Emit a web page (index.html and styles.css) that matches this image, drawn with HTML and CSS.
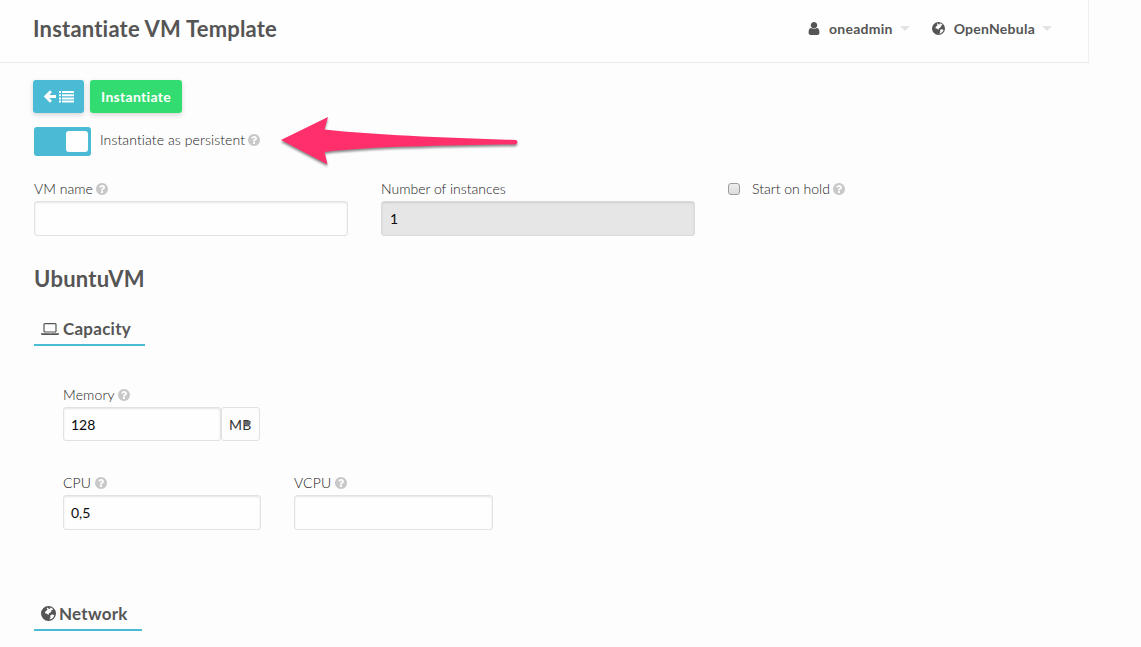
FILE: index.html
```
<!DOCTYPE html>
<html lang="en">
<head>
<meta charset="utf-8">
<title>Instantiate VM Template</title>
<link rel="stylesheet" href="styles.css">
</head>
<body>
<svg class="sprite" aria-hidden="true">
  <symbol id="help" viewBox="128 128 1536 1536"><path d="M1024 1376v-192q0-14-9-23t-23-9h-192q-14 0-23 9t-9 23v192q0 14 9 23t23 9h192q14 0 23-9t9-23zm256-672q0-88-55.500-163t-138.500-116-170-41q-243 0-371 213-15 24 8 42l132 100q7 6 19 6 16 0 25-12 53-68 86-92 34-24 86-24 48 0 85.500 26t37.500 59q0 38-20 61t-68 45q-63 28-115.500 86.500t-52.500 125.500v36q0 14 9 23t23 9h192q14 0 23-9t9-23q0-19 21.500-49.500t54.500-49.500q32-18 49-28.500t46-35 44.500-48 28-60.500 12.500-81zm384 192q0 209-103 385.500t-279.500 279.500-385.500 103-385.500-103-279.500-279.500-103-385.500 103-385.500 279.500-279.500 385.500-103 385.500 103 279.500 279.500 103 385.500z"/></symbol>
  <symbol id="globe" viewBox="0 0 24 24"><path fill-rule="evenodd" d="M12 0a12 12 0 1 1 0 24a12 12 0 1 1 0-24zM10.500 2.400L9 4 10.500 5.500 8.500 7.500 6.500 9.500 6.500 11.500 9.500 12.500 12 14.500 12.500 12 15 10.500 17 8.500 16 6.800 18.500 6.200 19.500 5.200 17 3.200 14 2.300 14.800 4.300 12.800 4.600zM16 14L14.600 16 15.300 18 13.500 21.700 16.500 20.800 19.600 18.200 21.400 14.600 19 13.600z"/></symbol>
</svg>
<header class="topbar">
  <h1 class="page-title">Instantiate VM Template</h1>
  <nav class="menus">
    <a class="menu"><svg class="user-icon" viewBox="256 128 1280 1536"><path d="M1536 1399q0 109-62.500 187t-150.500 78h-854q-88 0-150.500-78t-62.500-187q0-85 8.500-160.500t31.500-152 58.500-131 94-89 134.500-34.500q131 128 313 128t313-128q76 0 134.500 34.500t94 89 58.500 131 31.500 152 8.500 160.500zm-256-887q0 159-112.500 271.500t-271.500 112.500-271.500-112.500-112.500-271.500 112.500-271.500 271.500-112.500 271.500 112.500 112.500 271.500z"/></svg><span>oneadmin</span><i class="caret"></i></a>
    <a class="menu"><svg class="zone-icon"><use href="#globe"/></svg><span>OpenNebula</span><i class="caret"></i></a>
  </nav>
</header>
<main class="content">
  <div class="actions">
    <button class="btn btn-back" type="button" aria-label="Back to list">
      <svg class="arrow-icon" viewBox="0 0 12 13"><path d="M7 1.300L1.800 6.500 7 11.700M2.500 6.500H12" fill="none" stroke="currentColor" stroke-width="2.800"/></svg>
      <svg class="list-icon" viewBox="0 0 15 12"><path d="M0 0h2v2H0zM3 0h12v2H3zM0 3.200h2v2H0zM3 3.200h12v2H3zM0 6.400h2v2H0zM3 6.400h12v2H3zM0 9.600h2v2H0zM3 9.600h12v2H3z"/></svg>
    </button>
    <button class="btn btn-go" type="button">Instantiate</button>
  </div>
  <div class="persist">
    <span class="switch"><span class="knob"></span></span>
    <span class="label">Instantiate as persistent<svg class="help"><use href="#help"/></svg></span>
    <svg class="pointer" viewBox="0 0 250 60"><path d="M6 30L53 7 49.500 19.500C100 25 165 27.500 241 30Q244 32 241 34.300C165 36 100 36 49.500 42L52.500 54.500Z"/></svg>
  </div>
  <div class="form-row">
    <div class="field wide"><label class="label">VM name<svg class="help"><use href="#help"/></svg></label><div class="input"></div></div>
    <div class="field wide"><label class="label">Number of instances</label><div class="input disabled">1</div></div>
    <div class="hold"><span class="checkbox"></span><label class="label">Start on hold<svg class="help"><use href="#help"/></svg></label></div>
  </div>
  <h2 class="template-name">UbuntuVM</h2>
  <h3 class="section capacity"><svg class="laptop-icon" viewBox="0 256 1920 1280"><path d="M416 1280q-66 0-113-47t-47-113v-704q0-66 47-113t113-47h1088q66 0 113 47t47 113v704q0 66-47 113t-113 47h-1088zm-32-864v704q0 13 9.500 22.500t22.500 9.500h1088q13 0 22.500-9.500t9.500-22.500v-704q0-13-9.500-22.500t-22.500-9.500h-1088q-13 0-22.500 9.500t-9.500 22.500zm1376 928h160v96q0 40-47 68t-113 28h-1600q-66 0-113-28t-47-68v-96h1760zm-720 96q16 0 16-16t-16-16h-160q-16 0-16 16t16 16h160z"/></svg><span>Capacity</span></h3>
  <div class="capacity-form">
    <div class="field small"><label class="label">Memory<svg class="help"><use href="#help"/></svg></label>
      <div class="input-group"><div class="input amount">128</div><div class="unit">MB<i class="unit-caret"></i></div></div></div>
    <div class="cpu-row">
      <div class="field small"><label class="label">CPU<svg class="help"><use href="#help"/></svg></label><div class="input">0,5</div></div>
      <div class="field small vcpu"><label class="label">VCPU<svg class="help"><use href="#help"/></svg></label><div class="input"></div></div>
    </div>
  </div>
  <h3 class="section network"><svg class="net-icon"><use href="#globe"/></svg><span>Network</span></h3>
</main>
</body>
</html>
```
FILE: styles.css
```
* { box-sizing: border-box; }
body {
  margin: 0;
  height: 647px;
  overflow: hidden;
  background: #fdfdfd;
  color: #555;
  font-family: Lato, "Liberation Sans", sans-serif;
  font-size: 14px;
}
svg { fill: currentColor; flex: none; }
h1, h2, h3 { margin: 0; font-weight: 700; }
.sprite { position: absolute; width: 0; height: 0; }

.topbar {
  display: flex;
  justify-content: space-between;
  width: 1089px;
  height: 63px;
  padding: 0 36px 0 33px;
  border-right: 1px solid #efefef;
  border-bottom: 1px solid #e9e9e9;
  background: #fefefe;
}
.page-title { font-size: 22px; line-height: 58px; letter-spacing: .2px; }
.menus { display: flex; gap: 22px; height: 57px; }
.menu { display: flex; align-items: center; font-size: 14px; font-weight: 700; letter-spacing: .25px; }
.user-icon { width: 12px; height: 13px; margin-right: 9px; }
.zone-icon { width: 13px; height: 13px; margin-right: 9px; }
.caret {
  margin-left: 7px;
  border: 5px solid transparent;
  border-top-color: #e3e3e3;
  border-bottom: 0;
}

.content { padding: 17px 0 0 34px; }
.actions { display: flex; gap: 6px; margin-left: -1px; }
.btn {
  display: flex;
  align-items: center;
  justify-content: center;
  height: 33px;
  padding: 0;
  border: 0;
  border-radius: 3px;
  color: #fefefe;
  font: 700 14px Lato, sans-serif;
  letter-spacing: .3px;
  box-shadow: 0 2px 5px rgba(0, 0, 0, .16);
}
.btn-back { width: 51px; gap: 3px; background: #4abad5; }
.btn-go { width: 92px; background: #33dc70; }
.arrow-icon { width: 12px; height: 13px; }
.list-icon { width: 15px; height: 12px; }

.label {
  display: flex;
  align-items: center;
  color: #222;
  font-size: 14px;
  font-weight: 300;
  line-height: 20px;
  white-space: nowrap;
}
.help { width: 12px; height: 12px; margin-left: 3px; color: #c8c8c8; }

.persist { display: flex; height: 29px; margin-top: 14px; }
.persist .label { width: 162px; height: 26px; margin-left: 9px; letter-spacing: .09px; }
.switch {
  display: flex;
  justify-content: flex-end;
  width: 57px;
  height: 29px;
  padding: 4px 3px;
  border-radius: 3px;
  background: #4abad5;
}
.knob { width: 22px; height: 21px; border-radius: 3px; background: #fefefe; }
.pointer {
  width: 250px;
  height: 60px;
  margin: -17px 0 0 13px;
  fill: #ff2f6c;
  filter: drop-shadow(0 2px 1px rgba(0, 0, 0, .45));
}

.form-row { display: flex; gap: 33px; margin-top: 23px; }
.wide { width: 314px; }
.small { width: 198px; }
.vcpu { width: 199px; }
.input {
  height: 35px;
  margin-top: 2px;
  padding: 0 7px;
  border: 1px solid #e2e2e2;
  border-radius: 3px;
  background: #fefefe;
  box-shadow: inset 0 1px 2px rgba(10, 10, 10, .1);
  color: #0a0a0a;
  font-size: 14px;
  line-height: 34px;
}
.disabled { padding-left: 8px; background: #e6e6e6; border-color: #dadada; }
.hold { display: flex; align-items: center; height: 20px; }
.checkbox {
  width: 12px;
  height: 12px;
  margin-right: 12px;
  border: 1px solid #9c9c9c;
  border-radius: 3px;
  background: linear-gradient(#eee, #dcdcdc);
}

.template-name { margin-top: 27px; font-size: 22px; line-height: 32px; letter-spacing: .25px; }
.section {
  display: flex;
  align-items: center;
  height: 33px;
  padding: 0 0 1px 7px;
  border-bottom: 2px solid #4abad5;
  font-size: 17px;
  letter-spacing: .25px;
}
.capacity { width: 111px; margin-top: 18px; }
.laptop-icon { width: 18px; height: 12px; margin: 1px 4px 0 0; }
.network { width: 108px; margin-top: 68px; }
.net-icon { width: 15px; height: 15px; margin-right: 3px; }

.capacity-form { margin: 39px 0 0 29px; }
.capacity-form .label { letter-spacing: .15px; }
.input-group { display: flex; margin-top: 2px; }
.amount { width: 158px; height: 34px; margin: 0; }
.unit {
  display: flex;
  align-items: center;
  position: relative;
  width: 39px;
  height: 34px;
  padding-left: 7px;
  border: 1px solid #e2e2e2;
  border-radius: 3px;
  color: #333;
  font-size: 14px;
  letter-spacing: .2px;
}
.unit-caret {
  position: absolute;
  top: 13px;
  right: 8px;
  border: 4px solid transparent;
  border-top: 6px solid #666;
  border-bottom: 0;
}
.cpu-row { display: flex; gap: 33px; margin-top: 32px; }
.cpu-row .help { margin-left: 4px; }
```
